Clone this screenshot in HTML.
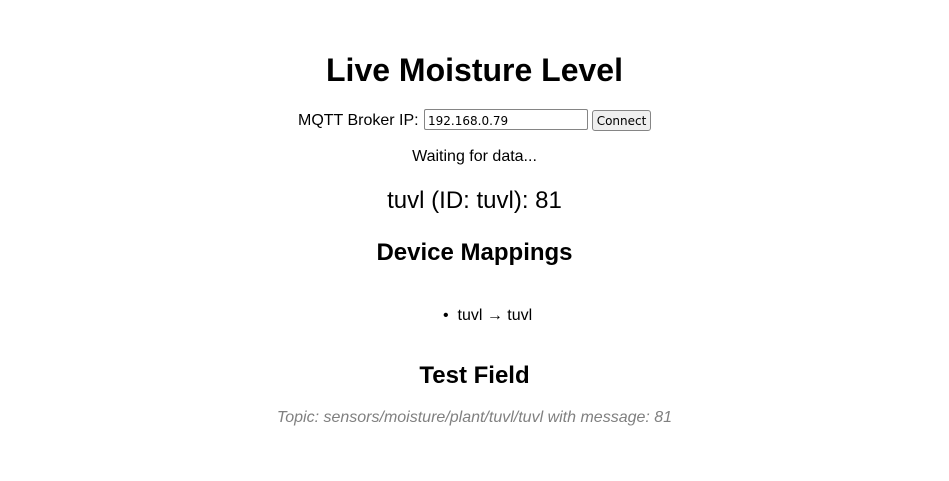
<!DOCTYPE html>
<html><head><meta charset="utf-8"><style>
body{margin:0;width:949px;height:481px;background:#fff;font-family:"Liberation Sans",Arial,sans-serif;color:#000;position:relative;overflow:hidden}
.c{position:absolute;left:0;width:949px;text-align:center;white-space:nowrap}
input{position:absolute;left:424px;top:109px;width:164px;height:21px;box-sizing:border-box;border:1px solid #858585;border-radius:2px;font:12px "DejaVu Sans",sans-serif;padding:2px 3px 0;}
button{position:absolute;left:592px;top:110px;width:59px;height:21px;box-sizing:border-box;border:1px solid #858585;border-radius:3px;background:#efefef;font:12px "DejaVu Sans",sans-serif;padding:0}
</style></head><body>
<div class="c" style="top:51px;font-size:32px;font-weight:bold;line-height:38px">Live Moisture Level</div>
<div style="position:absolute;left:298px;top:111px;font-size:16px;line-height:20px">MQTT Broker IP:</div>
<input value="192.168.0.79"><button>Connect</button>
<div class="c" style="top:147px;font-size:16px;line-height:20px">Waiting for data...</div>
<div class="c" style="top:187px;font-size:24px;line-height:28px">tuvl (ID: tuvl): 81</div>
<div class="c" style="top:239px;font-size:24px;font-weight:bold;line-height:28px">Device Mappings</div>
<div style="position:absolute;left:443px;top:306px;font-size:16px;line-height:20px;white-space:nowrap">•&nbsp; tuvl → tuvl</div>
<div class="c" style="top:362px;font-size:24px;font-weight:bold;line-height:28px">Test Field</div>
<div class="c" style="top:408px;font-size:16px;line-height:20px;font-style:italic;color:#808080">Topic: sensors/moisture/plant/tuvl/tuvl with message: 81</div>
</body></html>
